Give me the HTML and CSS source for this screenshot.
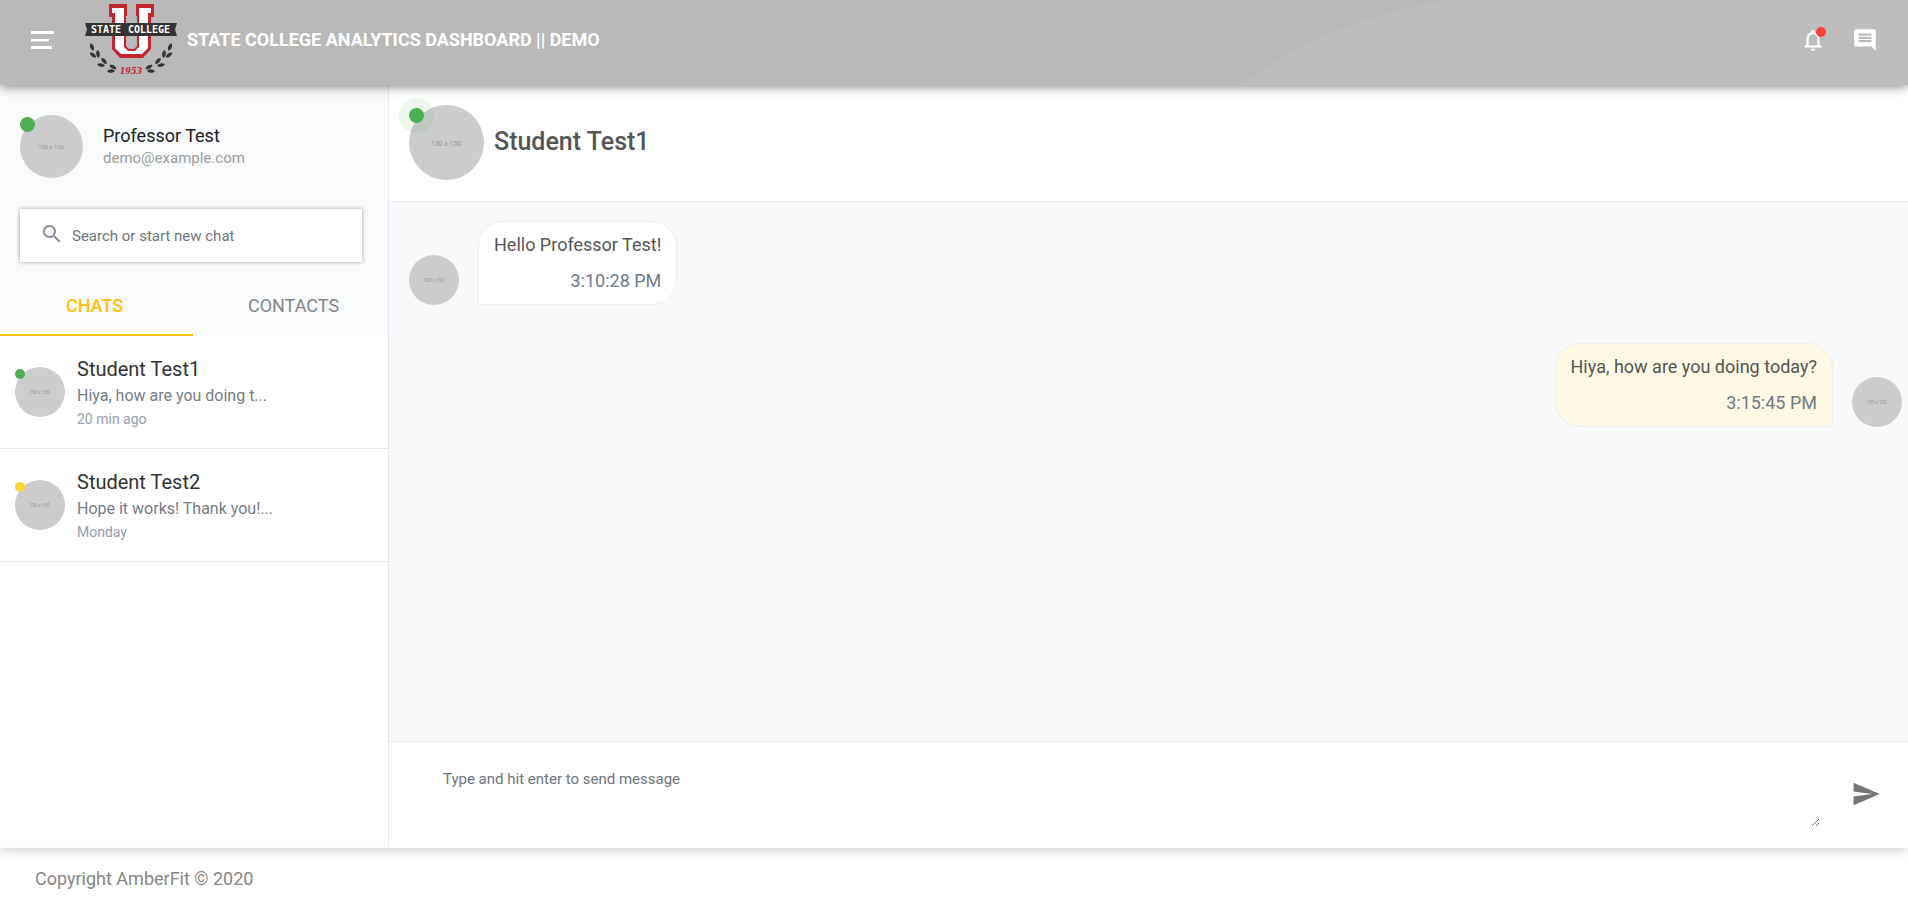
FILE: index.html
```html
<!DOCTYPE html>
<html lang="en">
<head>
<meta charset="utf-8">
<meta name="viewport" content="width=device-width, initial-scale=1">
<title>State College Analytics Dashboard</title>
<link rel="stylesheet" href="styles.css">
</head>
<body>
<header class="topbar">
  <svg class="topbar-arc" viewBox="0 0 668 85" preserveAspectRatio="none" aria-hidden="true">
    <path d="M0 85A477 477 0 0 1 207 0H668V85Z" fill="#bdbdbd"/>
  </svg>
  <button class="icon-button" type="button" aria-label="Menu">
    <svg width="24" height="18" viewBox="0 0 24 18" fill="#fff"><path d="M0 0h23v3H0zM0 8h18v2.500H0zM0 15h21v3H0z"/></svg>
  </button>
  <a class="brand" href="#">
    <svg class="logo" width="94" height="74" viewBox="0 0 94 74" role="img" aria-label="State College 1953">
      <defs>
        <path id="leaf" d="M-4 0C-2-2.400 2-2.400 4 0C2 2.400-2 2.400-4 0Z"/>
        <g id="branch" fill="#333">
          <use href="#leaf" transform="translate(7 44) rotate(68)"/>
          <use href="#leaf" transform="translate(8 52) rotate(38)"/>
          <use href="#leaf" transform="translate(13 51) rotate(82)"/>
          <use href="#leaf" transform="translate(16 62) rotate(10)"/>
          <use href="#leaf" transform="translate(19 58) rotate(48)"/>
          <use href="#leaf" transform="translate(26 68) rotate(-4)"/>
          <use href="#leaf" transform="translate(28 64) rotate(28)"/>
        </g>
      </defs>
      <path d="M24 1H42V13H41V43L44 46H49L52 43V13H51V1H69V14H66V46L58 55H35L27 46V14H24Z" fill="#c4262e"/>
      <path d="M27 5H39V44L43 48H50L54 44V5H66V10H63V45L57 51H36L30 45V10H27Z" fill="#fff"/>
      <path d="M0 20H92L90 26.500L92 33H0L2 26.500Z" fill="#333"/>
      <text class="logo-word" x="21" y="30" text-anchor="middle">STATE</text>
      <text class="logo-word" x="64" y="30" text-anchor="middle">COLLEGE</text>
      <text class="logo-year" x="46" y="71" text-anchor="middle">1953</text>
      <use href="#branch"/>
      <use href="#branch" transform="translate(92 0) scale(-1 1)"/>
    </svg>
    <span class="brand-name">STATE COLLEGE ANALYTICS DASHBOARD || DEMO</span>
  </a>
  <div class="topbar-actions">
    <button class="icon-button has-badge" type="button" aria-label="Notifications">
      <svg width="26" height="26" viewBox="0 0 24 24" fill="#fff"><path d="M12 22c1.100 0 2-.9 2-2h-4c0 1.100.9 2 2 2zm6-6v-5c0-3.070-1.630-5.640-4.500-6.320V4c0-.83-.67-1.500-1.500-1.500s-1.500.67-1.500 1.500v.68C7.640 5.360 6 7.920 6 11v5l-2 2v1h16v-1l-2-2zm-2 1H8v-6c0-2.480 1.510-4.500 4-4.500s4 2.020 4 4.500v6z"/></svg>
      <span class="badge"></span>
    </button>
    <button class="icon-button" type="button" aria-label="Messages">
      <svg width="26" height="26" viewBox="0 0 24 24" fill="#fff"><path d="M21.990 4c0-1.100-.89-2-1.990-2H4c-1.100 0-2 .9-2 2v12c0 1.100.9 2 2 2h14l4 4-.01-18z"/><path d="M6 12h12v2H6zM6 9h12v2H6zM6 6h12v2H6z" fill="#bdbdbd"/></svg>
    </button>
  </div>
</header>

<main class="chat">
  <aside class="sidebar">
    <div class="profile">
      <div class="avatar avatar-profile">
        <svg viewBox="0 0 150 150"><text class="avatar-text" x="74" y="82" text-anchor="middle">150 x 150</text></svg>
        <span class="status status-large"></span>
      </div>
      <div>
        <div class="profile-name">Professor Test</div>
        <div class="profile-mail">demo@example.com</div>
      </div>
    </div>
    <label class="search">
      <svg width="24" height="24" viewBox="0 0 24 24" fill="#868e96"><path d="M15.500 14h-.79l-.28-.27C15.410 12.590 16 11.110 16 9.500 16 5.910 13.090 3 9.500 3S3 5.910 3 9.500 5.910 16 9.500 16c1.610 0 3.090-.59 4.230-1.570l.27.28v.79l5 4.990L20.490 19l-4.990-5zm-6 0C7.010 14 5 11.990 5 9.500S7.010 5 9.500 5 14 7.010 14 9.500 11.990 14 9.500 14z"/></svg>
      <input class="search-input" type="text" placeholder="Search or start new chat" aria-label="Search or start new chat">
    </label>
    <div class="tabs" role="tablist">
      <button class="tab tab-active" type="button" role="tab" aria-selected="true">CHATS</button>
      <button class="tab" type="button" role="tab" aria-selected="false">CONTACTS</button>
    </div>
    <ul class="threads">
      <li class="thread">
        <div class="avatar avatar-small">
          <svg viewBox="0 0 150 150"><text class="avatar-text" x="74" y="82" text-anchor="middle">150 x 150</text></svg>
          <span class="status"></span>
        </div>
        <div>
          <div class="thread-name">Student Test1</div>
          <div class="thread-text">Hiya, how are you doing t...</div>
          <div class="thread-time">20 min ago</div>
        </div>
      </li>
      <li class="thread">
        <div class="avatar avatar-small">
          <svg viewBox="0 0 150 150"><text class="avatar-text" x="74" y="82" text-anchor="middle">150 x 150</text></svg>
          <span class="status status-away"></span>
        </div>
        <div>
          <div class="thread-name">Student Test2</div>
          <div class="thread-text">Hope it works! Thank you!...</div>
          <div class="thread-time">Monday</div>
        </div>
      </li>
    </ul>
  </aside>

  <section class="conversation">
    <div class="conversation-head">
      <div class="avatar avatar-large">
        <svg viewBox="0 0 150 150"><text class="avatar-text" x="74" y="82" text-anchor="middle">150 x 150</text></svg>
        <span class="status status-large status-halo"></span>
      </div>
      <h1 class="conversation-name">Student Test1</h1>
    </div>
    <div class="messages">
      <div class="message">
        <div class="avatar avatar-small"><svg viewBox="0 0 150 150"><text class="avatar-text" x="74" y="82" text-anchor="middle">150 x 150</text></svg></div>
        <div class="bubble">
          <div class="bubble-text">Hello Professor Test!</div>
          <div class="bubble-time">3:10:28 PM</div>
        </div>
      </div>
      <div class="message message-own">
        <div class="bubble bubble-own">
          <div class="bubble-text">Hiya, how are you doing today?</div>
          <div class="bubble-time">3:15:45 PM</div>
        </div>
        <div class="avatar avatar-small"><svg viewBox="0 0 150 150"><text class="avatar-text" x="74" y="82" text-anchor="middle">150 x 150</text></svg></div>
      </div>
    </div>
    <form class="composer">
      <textarea class="composer-input" placeholder="Type and hit enter to send message" aria-label="Message"></textarea>
      <button class="icon-button" type="button" aria-label="Send">
        <svg width="30" height="30" viewBox="0 0 24 24" fill="#757575"><path d="M2.010 21L23 12 2.010 3 2 10l15 2-15 2z"/></svg>
      </button>
    </form>
  </section>
</main>

<footer class="footer">Copyright AmberFit © 2020</footer>
</body>
</html>
```

FILE: styles.css
```css
* {
  box-sizing: border-box;
}

body {
  margin: 0;
  min-height: 100vh;
  display: flex;
  flex-direction: column;
  font-family: Roboto, "Liberation Sans", sans-serif;
  font-size: 18px;
  line-height: 24px;
  color: #555;
  background: #fff;
}

.icon-button {
  display: flex;
  padding: 0;
  border: 0;
  background: none;
  cursor: pointer;
}

/* Top bar */
.topbar {
  position: relative;
  z-index: 2;
  display: flex;
  align-items: center;
  height: 85px;
  padding: 0 30px 5px 31px;
  background: #b9b9b9;
  box-shadow: 0 2px 10px rgba(0, 0, 0, 0.45);
}

.topbar-arc {
  position: absolute;
  top: 0;
  right: 0;
  width: 35%;
  height: 100%;
}

.brand {
  display: flex;
  align-items: center;
  gap: 8px;
  margin-left: 30px;
  color: #fff;
  text-decoration: none;
}

.logo-word {
  font: bold 10px "DejaVu Sans Mono", monospace;
  fill: #fff;
}

.logo-year {
  font: italic bold 9px "DejaVu Serif Condensed", "DejaVu Serif", serif;
  fill: #c4262e;
}

.brand-name {
  font-weight: 700;
}

.topbar-actions {
  position: relative;
  display: flex;
  gap: 26px;
  margin-left: auto;
}

.has-badge {
  position: relative;
}

.badge {
  position: absolute;
  top: 0;
  right: 0;
  width: 10px;
  height: 10px;
  border-radius: 50%;
  background: #f44336;
}

/* Avatars */
.avatar {
  position: relative;
  flex: none;
}

.avatar svg {
  display: block;
  width: 100%;
  height: 100%;
  border-radius: 50%;
  background: #ccc;
}

.avatar-text {
  font-size: 14px;
  fill: #969696;
}

.avatar-small {
  width: 50px;
  height: 50px;
}

.avatar-profile {
  width: 63px;
  height: 63px;
}

.avatar-large {
  width: 75px;
  height: 75px;
}

.status {
  position: absolute;
  top: 2px;
  left: 0;
  width: 10px;
  height: 10px;
  border-radius: 50%;
  background: #4caf50;
}

.status-large {
  width: 15px;
  height: 15px;
}

.status-halo {
  top: 3px;
  box-shadow: 0 0 0 10px rgba(76, 175, 80, 0.1);
}

.status-away {
  background: #fdd835;
}

/* Main area */
.chat {
  position: relative;
  z-index: 1;
  flex: 1;
  display: flex;
  box-shadow: 0 2px 10px rgba(0, 0, 0, 0.2);
}

.sidebar {
  flex: none;
  display: flex;
  flex-direction: column;
  width: 389px;
  padding-bottom: 8px;
  border-right: 1px solid #e3e8ee;
  background: #f8fafc;
}

.profile {
  display: flex;
  align-items: center;
  gap: 20px;
  padding: 30px 20px 31px;
}

.profile-name {
  line-height: 22px;
  color: #212121;
}

.profile-mail {
  font-size: 15px;
  line-height: 22px;
  color: #9e9e9e;
}

.search {
  display: flex;
  align-items: center;
  gap: 8px;
  height: 53px;
  margin: 0 26px 0 20px;
  padding: 0 20px;
  background: #fff;
  box-shadow: 0 0 4px rgba(0, 0, 0, 0.4);
}

.search svg {
  margin-bottom: 4px;
}

.search-input {
  flex: 1;
  min-width: 0;
  padding: 0;
  border: 0;
  outline: 0;
  font: 15px/24px Roboto, sans-serif;
  color: #495057;
  background: none;
}

.search-input::placeholder,
.composer-input::placeholder {
  color: #6c757d;
  opacity: 1;
}

.tabs {
  display: flex;
  height: 60px;
  margin-top: 14px;
}

.tab {
  flex: 1;
  padding: 2px 0 0 6px;
  border: 0;
  border-bottom: 2px solid transparent;
  background: none;
  font: 18px/24px Roboto, sans-serif;
  color: #868686;
  cursor: pointer;
}

.tab-active {
  padding: 2px 4px 0 0;
  border-bottom-color: #ffc107;
  font-weight: 500;
  color: #ffc107;
}

.threads {
  flex: 1;
  margin: 0;
  padding: 0;
  list-style: none;
  background: #fff;
}

.thread {
  display: flex;
  align-items: center;
  gap: 12px;
  height: 113px;
  padding: 0 15px;
  border-bottom: 1px solid #e3eaef;
}

.thread-name {
  font-size: 20px;
  line-height: 28px;
  color: #333;
}

.thread-text {
  font-size: 16px;
  line-height: 26px;
  color: #747d86;
}

.thread-time {
  font-size: 14px;
  line-height: 20px;
  color: #949cb0;
}

.conversation {
  flex: 1;
  min-width: 0;
  display: flex;
  flex-direction: column;
  background: #fff;
}

.conversation-head {
  display: flex;
  align-items: center;
  gap: 10px;
  height: 117px;
  padding: 0 20px 2px;
  border-bottom: 1px solid #e9ecef;
}

.conversation-name {
  margin: 0;
  font-size: 25px;
  font-weight: 500;
  line-height: 32px;
  color: #555;
}

.messages {
  flex: 1;
  display: flex;
  flex-direction: column;
  gap: 38px;
  padding: 19px 6px 19px 20px;
  background: #f8f9fb;
}

.message {
  display: flex;
  align-items: flex-end;
  gap: 19px;
}

.message-own {
  justify-content: flex-end;
}

.bubble {
  padding: 11px 15px;
  border: 1px solid #eceef1;
  border-radius: 25px 25px 25px 0;
  background: #fff;
}

.bubble-own {
  border-radius: 25px 25px 0 25px;
  background: #fff8e4;
}

.bubble-text {
  margin-bottom: 12px;
  color: #555;
}

.bubble-time {
  text-align: right;
  color: #6f7b86;
}

.composer {
  display: flex;
  align-items: center;
  gap: 31px;
  height: 107px;
  padding: 0 27px 2px 34px;
  border-top: 1px solid #e8ebf2;
}

.composer-input {
  flex: 1;
  height: 66px;
  padding: 7px 20px;
  border: 0;
  outline: 0;
  resize: vertical;
  font: 15px/22px Roboto, sans-serif;
  color: #495057;
  background: none;
}

.footer {
  height: 55px;
  padding: 19px 35px;
  color: #868686;
}
```
